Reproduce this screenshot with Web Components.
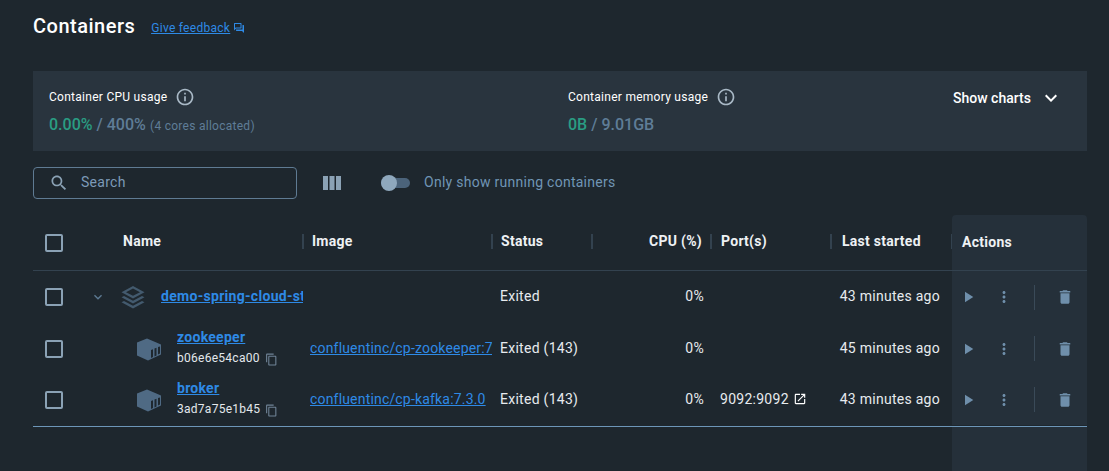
<!DOCTYPE html>
<html lang="en">
<head>
<meta charset="utf-8">
<title>Containers</title>
<style>
    html, body {
        height: 100%;
        margin: 0;
    }

    body {
        background-color: #1e272e;
        color: #e7ebef;
        font-family: Roboto, 'Liberation Sans', sans-serif;
        font-size: 14px;
        letter-spacing: .27px;
        overflow: hidden;
    }
</style>
</head>
<body>
<containers-page>
    <stats-bar>
        <stat-item label="Container CPU usage">
            <span class="used">0.00%</span><span> / 400%</span><small> (4 cores allocated)</small>
        </stat-item>
        <stat-item label="Container memory usage">
            <span class="used">0B</span><span> / 9.01GB</span>
        </stat-item>
    </stats-bar>
    <table-toolbar></table-toolbar>
    <container-table>
        <container-row kind="group" name="demo-spring-cloud-st" status="Exited" cpu="0%" started="43 minutes ago"></container-row>
        <container-row name="zookeeper" short-id="b06e6e54ca00" image="confluentinc/cp-zookeeper:7" status="Exited (143)" cpu="0%" started="45 minutes ago"></container-row>
        <container-row name="broker" short-id="3ad7a75e1b45" image="confluentinc/cp-kafka:7.3.0" status="Exited (143)" cpu="0%" port="9092:9092" started="43 minutes ago"></container-row>
    </container-table>
</containers-page>

<script>
/**
 * Icon paths, all on a 24 unit box.
 */
const icons = {
    info: 'M11 7h2v2h-2zm0 4h2v6h-2zm1-9C6.48 2 2 6.48 2 12s4.48 10 10 10 10-4.48 10-10S17.52 2 12 2zm0 18c-4.41 0-8-3.59-8-8s3.59-8 8-8 8 3.59 8 8-3.59 8-8 8z',
    search: 'M15.5 14h-.79l-.28-.27C15.41 12.59 16 11.11 16 9.5 16 5.91 13.09 3 9.5 3S3 5.91 3 9.5 5.91 16 9.5 16c1.61 0 3.09-.59 4.23-1.57l.27.28v.79l5 4.99L20.49 19l-4.99-5zm-6 0C7.01 14 5 11.99 5 9.5S7.01 5 9.5 5 14 7.01 14 9.5 11.99 14 9.5 14z',
    expand: 'M16.59 8.59 12 13.17 7.41 8.59 6 10l6 6 6-6z',
    play: 'M8 5v14l11-7z',
    more: 'M12 8c1.1 0 2-.9 2-2s-.9-2-2-2-2 .9-2 2 .9 2 2 2zm0 2c-1.1 0-2 .9-2 2s.9 2 2 2 2-.9 2-2-.9-2-2-2zm0 6c-1.1 0-2 .9-2 2s.9 2 2 2 2-.9 2-2-.9-2-2-2z',
    trash: 'M6 19c0 1.1.9 2 2 2h8c1.1 0 2-.9 2-2V7H6v12zM19 4h-3.5l-1-1h-5l-1 1H5v2h14V4z',
    open: 'M19 19H5V5h7V3H5c-1.11 0-2 .9-2 2v14c0 1.1.89 2 2 2h14c1.1 0 2-.9 2-2v-7h-2v7zM14 3v2h3.59l-9.83 9.83 1.41 1.41L19 6.41V10h2V3h-7z',
    copy: 'M16 1H4c-1.1 0-2 .9-2 2v14h2V3h12V1zm3 4H8c-1.1 0-2 .9-2 2v14c0 1.1.9 2 2 2h11c1.1 0 2-.9 2-2V7c0-1.1-.9-2-2-2zm0 16H8V7h11v14z',
    forum: 'M15 4v7H5.17L4 12.17V4h11m1-2H3c-.55 0-1 .45-1 1v14l4-4h10c.55 0 1-.45 1-1V3c0-.55-.45-1-1-1zm5 4h-2v9H6v2c0 .55.45 1 1 1h11l4 4V7c0-.55-.45-1-1-1z',
    columns: 'M4 5h5v14H4zM10.500 5h5v14h-5zM17 5h5v14h-5z',
    stack: 'M12 1 23.5 7.2 12 13.4.5 7.2zM12 3.6 5 7.2l7 3.6 7-3.600zM3 10.900l9 4.800 9-4.800 2.500 1.400L12 18.500.5 12.300zM3 15.900l9 4.800 9-4.800 2.500 1.400L12 23.500.5 17.300z',
    container: 'M0 5.500 10 1.500 24 7.500V17.500L11 23.500 0 18.500zM14 13v8l2-.9v-7.800zM17.500 11.500v8l2-.9v-7.800zM21 10v7.500l2-.9V9.500z'
}

/**
 * A single svg icon, named by its name attribute and sized by CSS.
 */
customElements.define('dd-icon',
  class extends HTMLElement {
    constructor () {
        super()

        const path = icons[this.getAttribute('name')]
        this.attachShadow({ mode: 'open' }).innerHTML = `
<style>
    :host {
        display: inline-flex;
        flex: none;
        width: var(--size, 18px);
        height: var(--size, 18px);
    }
    svg {
        width: 100%;
        height: 100%;
        fill: currentColor;
        fill-rule: evenodd;
    }
</style>
<svg viewBox="0 0 24 24" aria-hidden="true"><path d="${path}"></path></svg>`
    }
})

const pageTemplate = document.createElement('template')
pageTemplate.innerHTML = `
<style>
    :host {
        display: flex;
        flex-direction: column;
        height: 471px;
        padding: 0 22px 0 33px;
        box-sizing: border-box;
    }

    header {
        display: flex;
        align-items: center;
        gap: 16px;
        height: 51px;
        flex: none;
    }

    h1 {
        margin: 0;
        font-size: 20px;
        font-weight: 500;
        line-height: 24px;
        letter-spacing: .5px;
        color: #fff;
    }

    a {
        display: inline-flex;
        align-items: center;
        gap: 3px;
        margin-top: 4px;
        font-size: 12px;
        color: #2e8ae6;
    }

    a span {
        text-decoration: underline;
    }

    dd-icon {
        --size: 12px;
    }
</style>
<header>
    <h1>Containers</h1>
    <a href="#"><span>Give feedback</span><dd-icon name="forum"></dd-icon></a>
</header>
<slot></slot>
`

customElements.define('containers-page',
  class extends HTMLElement {
    constructor () {
        super()

        this.attachShadow({ mode: 'open' })
            .appendChild(pageTemplate.content.cloneNode(true))
    }
})

const statsTemplate = document.createElement('template')
statsTemplate.innerHTML = `
<style>
    :host {
        display: grid;
        grid-template-columns: 519px 385px 1fr;
        flex: none;
        height: 80px;
        margin-top: 20px;
        padding: 0 16px;
        box-sizing: border-box;
        background-color: #29343e;
    }

    button {
        display: flex;
        align-items: center;
        gap: 8px;
        height: 18px;
        margin-top: 18px;
        padding: 0;
        border: none;
        background: none;
        color: #fff;
        font: 500 14px Roboto, sans-serif;
    }

    dd-icon {
        --size: 24px;
    }
</style>
<slot></slot>
<button type="button">Show charts<dd-icon name="expand"></dd-icon></button>
`

customElements.define('stats-bar',
  class extends HTMLElement {
    constructor () {
        super()

        this.attachShadow({ mode: 'open' })
            .appendChild(statsTemplate.content.cloneNode(true))
    }
})

const statTemplate = document.createElement('template')
statTemplate.innerHTML = `
<style>
    :host {
        display: flex;
        flex-direction: column;
        padding-top: 15px;
        font-size: 16px;
        font-weight: 500;
        letter-spacing: 0;
        color: #5f7d97;
    }

    .label {
        display: flex;
        align-items: center;
        gap: 8px;
        height: 22px;
        font-size: 12px;
        font-weight: 400;
        letter-spacing: .27px;
        color: #fff;
    }

    .value {
        margin-top: 7px;
        line-height: 20px;
    }

    ::slotted(.used) {
        color: #2a9d83;
    }

    ::slotted(small) {
        margin-left: 1px;
        font-size: 12px;
        font-weight: 400;
        letter-spacing: .27px;
    }

    dd-icon {
        --size: 20px;
        color: #a9b9c6;
    }
</style>
<div class="label"><span id="label"></span><dd-icon name="info"></dd-icon></div>
<div class="value"><slot></slot></div>
`

customElements.define('stat-item',
  class extends HTMLElement {
    constructor () {
        super()

        this.attachShadow({ mode: 'open' })
            .appendChild(statTemplate.content.cloneNode(true))
        this.shadowRoot.querySelector('#label').textContent = this.getAttribute('label')
    }
})

const toolbarTemplate = document.createElement('template')
toolbarTemplate.innerHTML = `
<style>
    :host {
        display: flex;
        align-items: center;
        flex: none;
        height: 32px;
        margin-top: 16px;
    }

    .search {
        display: flex;
        align-items: center;
        gap: 12px;
        width: 264px;
        height: 32px;
        padding: 0 0 2px 15px;
        box-sizing: border-box;
        border: 1px solid #5f7b93;
        border-radius: 4px;
        color: #8ba2b5;
    }

    .search dd-icon {
        --size: 20px;
        margin-top: 2px;
    }

    .search span {
        color: #7c9ab8;
    }

    .columns {
        --size: 24px;
        margin-left: 22px;
        color: #8ba2b5;
    }

    .toggle {
        position: relative;
        width: 29px;
        height: 10px;
        margin-left: 38px;
        border-radius: 5px;
        background-color: #4b637a;
    }

    .toggle::before {
        content: '';
        position: absolute;
        top: -3px;
        left: 0;
        width: 16px;
        height: 16px;
        border-radius: 50%;
        background-color: #8fa8bd;
    }

    label {
        margin: 0 0 2px 14px;
        color: #7095b5;
    }
</style>
<div class="search"><dd-icon name="search"></dd-icon><span>Search</span></div>
<dd-icon class="columns" name="columns"></dd-icon>
<div class="toggle"></div>
<label>Only show running containers</label>
`

customElements.define('table-toolbar',
  class extends HTMLElement {
    constructor () {
        super()

        this.attachShadow({ mode: 'open' })
            .appendChild(toolbarTemplate.content.cloneNode(true))
    }
})

const tableTemplate = document.createElement('template')
tableTemplate.innerHTML = `
<style>
    :host {
        --cols: 47px 223px 189px 100px 119px 120px 121px 135px;
        display: flex;
        flex-direction: column;
        flex: 1;
        margin-top: 16px;
        min-height: 0;
    }

    .head, .rest {
        display: grid;
        grid-template-columns: var(--cols);
    }

    .head {
        height: 56px;
        box-sizing: border-box;
        border-bottom: 1px solid #33424f;
        align-items: center;
        font-weight: 700;
        color: #eef1f4;
    }

    .head > div {
        display: flex;
        align-items: center;
        height: 100%;
        padding-bottom: 4px;
        box-sizing: border-box;
        position: relative;
    }

    .sep::after {
        content: '';
        position: absolute;
        right: -1px;
        top: 19px;
        width: 2px;
        height: 15px;
        background-color: #33424f;
    }

    .head > div:first-child {
        padding-bottom: 0;
    }

    .check {
        width: 18px;
        height: 18px;
        margin-left: 12px;
        box-sizing: border-box;
        border: 2px solid #8ba2b5;
        border-radius: 2px;
    }

    .head > .name { padding-left: 43px; }
    .head > .image, .head > .status { padding-left: 9px; }
    .head > .ports { padding-left: 10px; }
    .head > .last { padding-left: 11px; }
    .head > .cpu { justify-content: flex-end; padding-right: 9px; }

    .head > .actions {
        padding: 0 0 2px 10px;
        border-radius: 4px 4px 0 0;
        background-color: #25303a;
    }

    .list {
        flex: none;
        padding-bottom: 1px;
        border-bottom: 1px solid #6d96b8;
    }

    .rest {
        flex: 1;
    }

    .rest div:last-child {
        grid-column: 8;
        background-color: #25303a;
    }
</style>
<div class="head">
    <div><span class="check"></span></div>
    <div class="name sep">Name</div>
    <div class="image sep">Image</div>
    <div class="status sep">Status</div>
    <div class="cpu sep">CPU (%)</div>
    <div class="ports sep">Port(s)</div>
    <div class="last sep">Last started</div>
    <div class="actions">Actions</div>
</div>
<div class="list"><slot></slot></div>
<div class="rest"><div></div></div>
`

customElements.define('container-table',
  class extends HTMLElement {
    constructor () {
        super()

        this.attachShadow({ mode: 'open' })
            .appendChild(tableTemplate.content.cloneNode(true))
    }
})

const rowTemplate = document.createElement('template')
rowTemplate.innerHTML = `
<style>
    :host {
        display: grid;
        grid-template-columns: var(--cols);
        height: 51px;
        align-items: center;
    }

    :host([kind="group"]) {
        height: 52px;
    }

    :host > div {
        min-width: 0;
        height: 100%;
        display: flex;
        align-items: center;
        overflow: hidden;
    }

    .check {
        flex: none;
        width: 18px;
        height: 18px;
        margin-left: 12px;
        box-sizing: border-box;
        border: 2px solid #8ba2b5;
        border-radius: 2px;
    }

    a {
        color: #2e8ae6;
        white-space: nowrap;
    }

    .name {
        padding-left: 57px;
    }

    .name .box {
        --size: 24px;
        color: #4f6a84;
        margin-right: 16px;
    }

    .name .text {
        display: flex;
        flex-direction: column;
        min-width: 0;
        margin-bottom: 3px;
    }

    .name a {
        font-weight: 700;
        line-height: 22px;
    }

    .id {
        display: flex;
        align-items: center;
        gap: 5px;
        font-size: 12px;
        line-height: 20px;
        color: #e3e8ec;
    }

    .id dd-icon {
        --size: 13px;
        color: #6f8396;
        margin-top: 2px;
    }

    :host([kind="group"]) .name {
        padding-left: 10px;
    }

    :host([kind="group"]) .name a {
        letter-spacing: .3px;
    }

    :host([kind="group"]) .text {
        margin-bottom: 2px;
    }

    :host([kind="group"]) .chevron {
        --size: 16px;
        color: #5d7a93;
        margin-right: 15px;
    }

    :host([kind="group"]) .box {
        color: #435a6e;
    }

    .image {
        padding: 0 0 2px 7px;
    }

    .image a {
        display: block;
        overflow: hidden;
        letter-spacing: .18px;
    }

    .status {
        padding: 0 0 2px 8px;
    }

    .status, .cpu, .port, .started {
        white-space: nowrap;
    }

    .cpu {
        justify-content: flex-end;
        padding: 0 7px 2px 0;
    }

    .port {
        gap: 4px;
        padding: 0 0 2px 9px;
    }

    .port dd-icon {
        --size: 14px;
        color: #fff;
    }

    .started {
        justify-content: flex-end;
        padding: 0 12px 2px 0;
    }

    .actions {
        background-color: #25303a;
        color: #6f8fab;
    }

    .actions dd-icon {
        --size: 18px;
    }

    .play {
        margin-left: 7px;
    }

    .more {
        margin-left: 18px;
    }

    .divider {
        width: 1px;
        height: 25px;
        margin-left: 21px;
        background-color: #3a4a58;
    }

    .trash {
        margin-left: 21px;
    }
</style>
<div><span class="check"></span></div>
<div class="name"></div>
<div class="image"></div>
<div class="status"></div>
<div class="cpu"></div>
<div class="port"></div>
<div class="started"></div>
<div class="actions">
    <dd-icon class="play" name="play"></dd-icon>
    <dd-icon class="more" name="more"></dd-icon>
    <span class="divider"></span>
    <dd-icon class="trash" name="trash"></dd-icon>
</div>
`

customElements.define('container-row',
  /**
   * One row of the table, a compose group or a single container.
   */
  class extends HTMLElement {
    constructor () {
        super()

        this.attachShadow({ mode: 'open' })
            .appendChild(rowTemplate.content.cloneNode(true))
    }

    /**
     * Fills the cells from the attributes.
     */
    connectedCallback () {
        const root = this.shadowRoot
        const name = this.getAttribute('name')
        const shortId = this.getAttribute('short-id')
        const image = this.getAttribute('image')
        const port = this.getAttribute('port')

        if (this.getAttribute('kind') === 'group') {
            root.querySelector('.name').innerHTML = `
                <dd-icon class="chevron" name="expand"></dd-icon>
                <dd-icon class="box" name="stack"></dd-icon>
                <div class="text"><a href="#">${name}</a></div>`
        } else {
            root.querySelector('.name').innerHTML = `
                <dd-icon class="box" name="container"></dd-icon>
                <div class="text">
                    <a href="#">${name}</a>
                    <span class="id">${shortId}<dd-icon name="copy"></dd-icon></span>
                </div>`
        }

        if (image) {
            root.querySelector('.image').innerHTML = `<a href="#">${image}</a>`
        }
        if (port) {
            root.querySelector('.port').innerHTML = `<span>${port}</span><dd-icon name="open"></dd-icon>`
        }

        root.querySelector('.status').textContent = this.getAttribute('status')
        root.querySelector('.cpu').textContent = this.getAttribute('cpu')
        root.querySelector('.started').textContent = this.getAttribute('started')
    }
})
</script>
</body>
</html>
